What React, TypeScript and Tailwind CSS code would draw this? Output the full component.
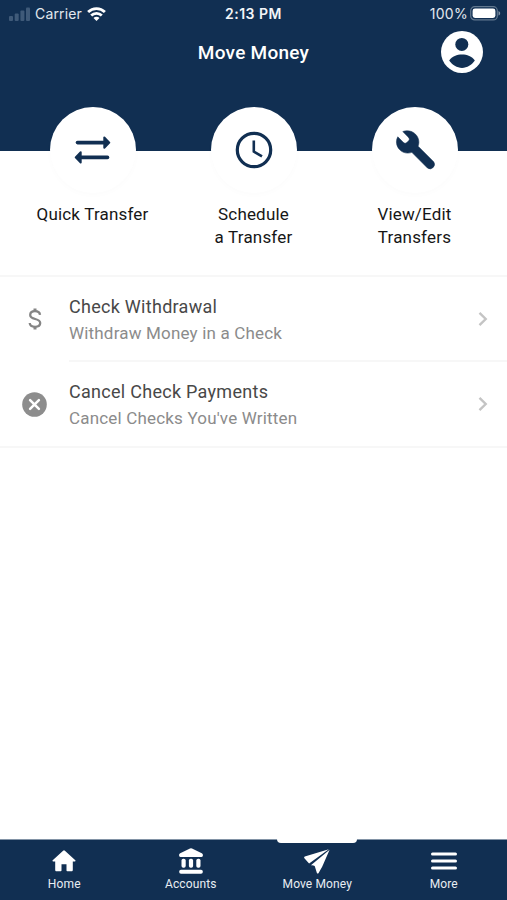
import type { ReactNode } from "react";

interface QuickActionProps {
  icon: ReactNode;
  lines: string[];
}

interface MoneyRowProps {
  icon: ReactNode;
  title: string;
  subtitle: string;
  last?: boolean;
}

interface TabProps {
  icon: ReactNode;
  label: string;
  active?: boolean;
}

function SignalIcon() {
  return (
    <svg width="21" height="14" viewBox="0 0 21 14" fill="#3f5a79">
      <rect x="0" y="9" width="4" height="5" rx="1" />
      <rect x="5.7" y="6.5" width="4" height="7.5" rx="1" />
      <rect x="11.4" y="3.5" width="4" height="10.5" rx="1" />
      <rect x="17" y="0.5" width="4" height="13.5" rx="1" />
    </svg>
  );
}

function WifiIcon() {
  return (
    <svg width="19" height="14" viewBox="0 0 19 14" fill="none" stroke="white" strokeWidth="2.8">
      <path d="M1.1 5.1a12 12 0 0 1 16.8 0" />
      <path d="M4.2 8.6a7.5 7.5 0 0 1 10.6 0" />
      <path d="M9.5 14 6.5 11a4.2 4.2 0 0 1 6 0z" fill="white" stroke="none" />
    </svg>
  );
}

function BatteryIcon() {
  return (
    <svg width="31" height="15" viewBox="0 0 31 15">
      <rect x="0.7" y="0.7" width="26.6" height="13.2" rx="4" fill="none" stroke="#62788f" strokeWidth="1.2" />
      <rect x="2.6" y="2.6" width="22.8" height="9.4" rx="2.4" fill="white" />
      <path d="M28.5 5v4.6c1-.4 1.7-1.3 1.7-2.3S29.5 5.4 28.5 5z" fill="#8293a6" />
    </svg>
  );
}

function ProfileIcon() {
  return (
    <svg width="42" height="42" viewBox="0 0 42 42">
      <circle cx="21" cy="21" r="21" fill="white" />
      <circle cx="20.8" cy="13.4" r="6.5" fill="#112f52" />
      <path d="M8.2 29.6C11 25.3 16 23.6 21 23.6s10 1.7 12.8 6C31 34 26 37 21 37S11 34 8.2 29.6z" fill="#112f52" />
    </svg>
  );
}

function TransferIcon() {
  return (
    <svg width="37" height="28" viewBox="0 0 37 28" fill="#112f52" stroke="#112f52" strokeLinejoin="round" strokeLinecap="round">
      <path d="M3.5 6.6h26" strokeWidth="3.6" />
      <path d="M30.3 1.5v10.200l5-5.100z" strokeWidth="2" />
      <path d="M7.5 21.4h26" strokeWidth="3.6" />
      <path d="M6.7 16.3v10.200l-5-5.100z" strokeWidth="2" />
    </svg>
  );
}

function ClockIcon() {
  return (
    <svg width="38" height="38" viewBox="0 0 38 38" fill="none" stroke="#112f52">
      <circle cx="19" cy="19" r="16.7" strokeWidth="3.2" />
      <path d="M18.8 9.6v11l8.200 4.800" strokeWidth="2.6" />
    </svg>
  );
}

function WrenchIcon() {
  return (
    <svg width="40" height="40" viewBox="3 2.6 37.6 37.6" fill="#112f52" stroke="#112f52" strokeWidth="0.5">
      <path d="M39.3 32.4 24.7 17.8c1.5-3.7.7-8.1-2.4-11.2C19 3.3 14.2 2.5 10.3 4.1l5 5c1.5 1.5 1.5 2.6.5 3.6l-1.7 1.7c-1.1 1-2.3.9-3.6-.5L5.6 9C3.400 13 4.200 17.900 7.500 21.200c3.100 3.100 7.500 3.900 11.300 2.400l14.700 14.700a4.200 4.200 0 0 0 5.800-5.900z" />
    </svg>
  );
}

function DollarIcon() {
  return (
    <svg width="14" height="22" viewBox="0 0 14 22" fill="none" stroke="#858585" strokeWidth="2.3">
      <path d="M12 6.8C11.8 4.6 9.9 3.2 7 3.2 4.2 3.2 2.2 4.6 2.2 6.9c0 2.5 2.1 3.3 5 4.1 3 .8 5 1.6 5 4.1 0 2.3-2 3.7-5.1 3.7-3.200 0-5.200-1.500-5.400-3.800" />
      <path d="M7 .5v3M7 18.5v3" strokeWidth="3" />
    </svg>
  );
}

function CancelIcon() {
  return (
    <svg width="25" height="25" viewBox="0 0 25 25">
      <circle cx="12.5" cy="12.5" r="12.3" fill="#8d8d8d" />
      <path d="m8.1 8.1 8.800 8.800m0-8.800-8.800 8.800" stroke="white" strokeWidth="2.5" strokeLinecap="round" />
    </svg>
  );
}

function ChevronIcon() {
  return (
    <svg width="10" height="14" viewBox="0 0 10 14" fill="none" stroke="#c4c4c4" strokeWidth="2.4">
      <path d="m1.5.9 6.200 6.100-6.200 6.100" />
    </svg>
  );
}

function HomeIcon() {
  return (
    <svg width="24" height="22" viewBox="0 0 24 22" fill="white">
      <path d="M11.1.7.7 10.2c-.5.5-.2 1.2.5 1.2h2v8.6c0 .8.5 1.3 1.3 1.3h4.200c.5 0 .8-.3.8-.8v-6.200h5v6.200c0 .5.3.8.8.8h4.200c.8 0 1.300-.5 1.300-1.300v-8.600h2c.7 0 1-.7.5-1.200L12.900.7a1.300 1.300 0 0 0-1.800 0z" />
    </svg>
  );
}

function BankIcon() {
  return (
    <svg width="24" height="26" viewBox="0 0 24 26" fill="white">
      <path d="M11 .4 1.2 5.3C.2 5.8.1 6.5.1 7.3c0 1 .5 1.6 1.4 1.6h21c.9 0 1.4-.6 1.4-1.6 0-.8-.1-1.5-1.100-2L13 .4a2.200 2.200 0 0 0-2 0z" />
      <rect x="2.5" y="10.7" width="4.2" height="9" rx="1.8" />
      <rect x="9.9" y="10.7" width="4.2" height="9" rx="1.8" />
      <rect x="17.3" y="10.7" width="4.2" height="9" rx="1.8" />
      <rect x="0.2" y="21.7" width="23.6" height="4" rx="1.8" />
    </svg>
  );
}

function PlaneIcon() {
  return (
    <svg width="26" height="25" viewBox="0 0 26 25" fill="white">
      <path d="M24.8.2.8 7.6c-.8.3-.9 1.100-.4 1.600l4.700 5.300z" />
      <path d="M25.6.8 6.9 16.3c1.7 0 3.4.3 3.900.9l2.100 6.700c.3.8 1.300.8 1.700.1l3.700-6.500z" />
    </svg>
  );
}

function MenuIcon() {
  return (
    <svg width="26" height="18" viewBox="0 0 26 18" stroke="white" strokeWidth="3" strokeLinecap="round">
      <path d="M1.5 2h23M1.5 9h23M1.5 16h23" />
    </svg>
  );
}

function QuickAction({ icon, lines }: QuickActionProps) {
  return (
    <button className="flex flex-col items-center">
      <span className="flex h-[86px] w-[86px] items-center justify-center rounded-full bg-white shadow-[0_2px_6px_rgba(0,0,0,0.015)]">
        {icon}
      </span>
      <span className="mt-[10px] text-center text-[17px] leading-[22.5px] tracking-[0.18px] text-[#161616]">
        {lines.map((line) => (
          <span key={line} className="block">{line}</span>
        ))}
      </span>
    </button>
  );
}

function MoneyRow({ icon, title, subtitle, last }: MoneyRowProps) {
  return (
    <li className={last ? "flex h-[86px] border-b-2 border-[#f7f7f7]" : "flex h-[85px]"}>
      <span className={`flex w-[69px] shrink-0 items-center justify-center ${last ? "" : "pb-[2px]"}`}>
        {icon}
      </span>
      <div
        className={`flex flex-1 items-center justify-between pr-[19px] ${
          last ? "" : "border-b-2 border-[#f7f7f7] pt-px"
        }`}
      >
        <div className="pt-[2px]">
          <h2 className="text-[18px] leading-[26px] tracking-[0.28px] text-[#484848]">{title}</h2>
          <p className="text-[17px] leading-[26px] tracking-[0.18px] text-[#8b8b8b]">{subtitle}</p>
        </div>
        <ChevronIcon />
      </div>
    </li>
  );
}

function Tab({ icon, label, active }: TabProps) {
  return (
    <button className="-mt-px flex flex-col items-center">
      <span className={active ? "h-[4px] w-20 rounded-b bg-white" : "h-[4px] w-20"} />
      <span className="mt-[4px] flex h-[28px] items-center justify-center">{icon}</span>
      <span className="mt-[2px] text-[12px] leading-[14px] tracking-[0.12px] text-[#e8edf2]">{label}</span>
    </button>
  );
}

export default function App() {
  return (
    <div className="flex h-[900px] w-[507px] flex-col overflow-hidden bg-white font-['Roboto',sans-serif]">
      <header className="h-[151px] shrink-0 bg-[#112f52] text-white">
        <div className="grid h-[27px] grid-cols-3 items-center px-[9px] font-['Inter',sans-serif] text-[14px] text-[#e3e8ee]">
          <div className="flex items-center gap-[5px]">
            <SignalIcon />
            <span className="tracking-[0.15px]">Carrier</span>
            <WifiIcon />
          </div>
          <span className="text-center font-semibold tracking-[0.5px] text-[#f2f5f8]">2:13 PM</span>
          <div className="-mr-[3px] flex items-center justify-end gap-[2px]">
            <span className="tracking-[0.3px]">100%</span>
            <BatteryIcon />
          </div>
        </div>
        <div className="grid h-[50px] grid-cols-3 items-center px-6">
          <span />
          <h1 className="pt-[3px] text-center text-[19px] font-medium tracking-[0.25px]">Move Money</h1>
          <button className="justify-self-end">
            <ProfileIcon />
          </button>
        </div>
      </header>

      <section className="-mt-[44px] grid h-[168px] shrink-0 grid-cols-3 items-start px-3">
        <QuickAction icon={<TransferIcon />} lines={["Quick Transfer"]} />
        <QuickAction icon={<ClockIcon />} lines={["Schedule", "a Transfer"]} />
        <QuickAction icon={<WrenchIcon />} lines={["View/Edit", "Transfers"]} />
      </section>

      <ul className="flex-1 border-t-2 border-[#f7f7f7]">
        <MoneyRow icon={<DollarIcon />} title="Check Withdrawal" subtitle="Withdraw Money in a Check" />
        <MoneyRow icon={<CancelIcon />} title="Cancel Check Payments" subtitle="Cancel Checks You've Written" last />
      </ul>

      <nav className="grid h-[61px] shrink-0 grid-cols-4 border-t border-[#8293a6] bg-[#112f52] pl-px">
        <Tab icon={<HomeIcon />} label="Home" />
        <Tab icon={<BankIcon />} label="Accounts" />
        <Tab icon={<PlaneIcon />} label="Move Money" active />
        <Tab icon={<MenuIcon />} label="More" />
      </nav>
    </div>
  );
}
